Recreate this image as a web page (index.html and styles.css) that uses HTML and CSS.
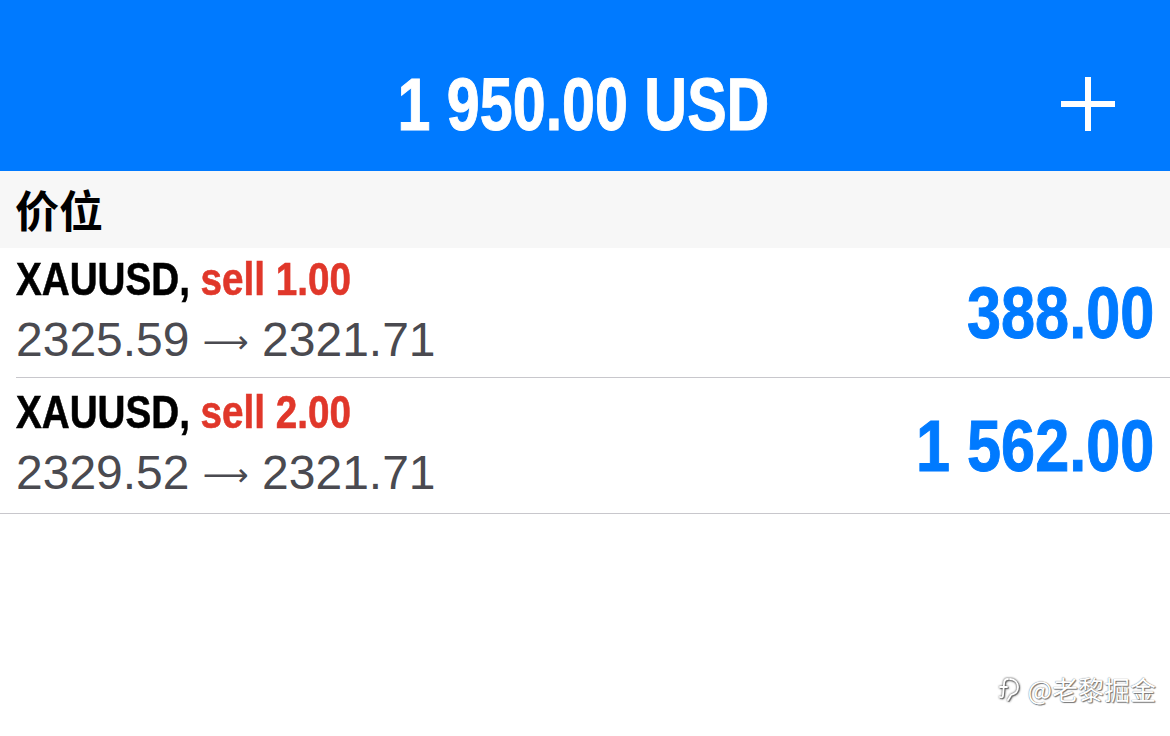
FILE: index.html
```html
<!DOCTYPE html>
<html lang="zh">
<head>
<meta charset="utf-8">
<link rel="stylesheet" href="styles.css">
</head>
<body>
<div class="app">
  <header class="topbar">
    <div class="title">1 950.00 USD</div>
    <button class="add" aria-label="add">
      <svg width="56" height="56" viewBox="0 0 56 56"><path d="M28 1V55M1 28H55" stroke="#fff" stroke-width="6"/></svg>
    </button>
  </header>
  <div class="section">价位</div>
  <div class="row inset">
    <div class="info">
      <div class="sym">XAUUSD, <span class="sell">sell 1.00</span></div>
      <div class="prices">2325.59 <span class="arrow">⟶</span> 2321.71</div>
    </div>
    <div class="profit">388.00</div>
  </div>
  <div class="row">
    <div class="info">
      <div class="sym">XAUUSD, <span class="sell">sell 2.00</span></div>
      <div class="prices">2329.52 <span class="arrow">⟶</span> 2321.71</div>
    </div>
    <div class="profit">1 562.00</div>
  </div>
  <div class="watermark">
    <svg width="24" height="26" viewBox="0 0 24 26"><path d="M11 3C8 3 7 5 7 8L6 19C6 21 5 22 3 21M3 11H10M13 3C18 3 21 7 21 11C21 16 18 18 14 19L11 24" fill="none" stroke="#fff" stroke-width="1.8" stroke-linecap="round" stroke-linejoin="round"/></svg>
    <span>@老黎掘金</span>
  </div>
</div>
</body>
</html>
```
FILE: styles.css
```css
* { box-sizing: border-box; }
html, body { margin: 0; padding: 0; background: #fff; }
.app {
  width: 1170px;
  height: 736px;
  position: relative;
  overflow: hidden;
  font-family: "Liberation Sans", Arial, sans-serif;
}
.topbar {
  height: 171px;
  background: #007aff;
  display: flex;
  align-items: center;
  justify-content: center;
  padding-top: 38px;
  position: relative;
}
.title {
  display: inline-block;
  color: #fff;
  font-weight: bold;
  font-size: 74px;
  line-height: 1;
  transform: scaleX(0.80);
  transform-origin: center;
  margin-left: -4px;
  -webkit-text-stroke: 1px #fff;
}
.add {
  position: absolute;
  right: 54px;
  top: 76px;
  background: none;
  border: 0;
  padding: 0;
  width: 56px;
  height: 56px;
}
.section {
  height: 77px;
  background: #f7f7f7;
  display: flex;
  align-items: center;
  padding-left: 15px;
  padding-bottom: 2px;
  font-family: "Noto Sans CJK SC", sans-serif;
  font-weight: bold;
  font-size: 44px;
  color: #000;
}
.row {
  height: 136px;
  display: flex;
  align-items: center;
  justify-content: space-between;
  padding: 0 16px;
  border-bottom: 1px solid #c8c7cc;
}
.row.inset { height: 130px; border-bottom: 0; position: relative; }
.row.inset::after {
  content: "";
  position: absolute;
  left: 16px; right: 0; bottom: 0;
  height: 1px;
  background: #c8c7cc;
}
.info { display: flex; flex-direction: column; align-items: flex-start; }
.sym {
  display: inline-block;
  font-weight: bold;
  font-size: 47px;
  line-height: 56px;
  color: #000;
  white-space: nowrap;
  transform: scaleX(0.822);
  transform-origin: left center;
  -webkit-text-stroke: 0.6px currentColor;
}
.sell { color: #e0372a; }
.prices {
  font-size: 48px;
  line-height: 65px;
  color: #4a4a50;
  white-space: nowrap;
}
.arrow {
  font-family: "DejaVu Sans", sans-serif;
  font-size: 32px;
  vertical-align: 3px;
}
.profit {
  display: inline-block;
  color: #007aff;
  font-weight: bold;
  font-size: 72px;
  line-height: 1;
  white-space: nowrap;
  transform: scaleX(0.85);
  transform-origin: right center;
  -webkit-text-stroke: 1px currentColor;
}
.watermark {
  position: absolute;
  right: 14px;
  bottom: 29px;
  display: flex;
  align-items: center;
  gap: 6px;
  color: #fff;
  font-family: "Noto Sans CJK SC", sans-serif;
  font-size: 26px;
  text-shadow: 0 0 1px #555, 1px 1px 1px #777;
}
.watermark svg { filter: drop-shadow(0 0 1px #444) drop-shadow(1px 1px 0 #888); }
```
